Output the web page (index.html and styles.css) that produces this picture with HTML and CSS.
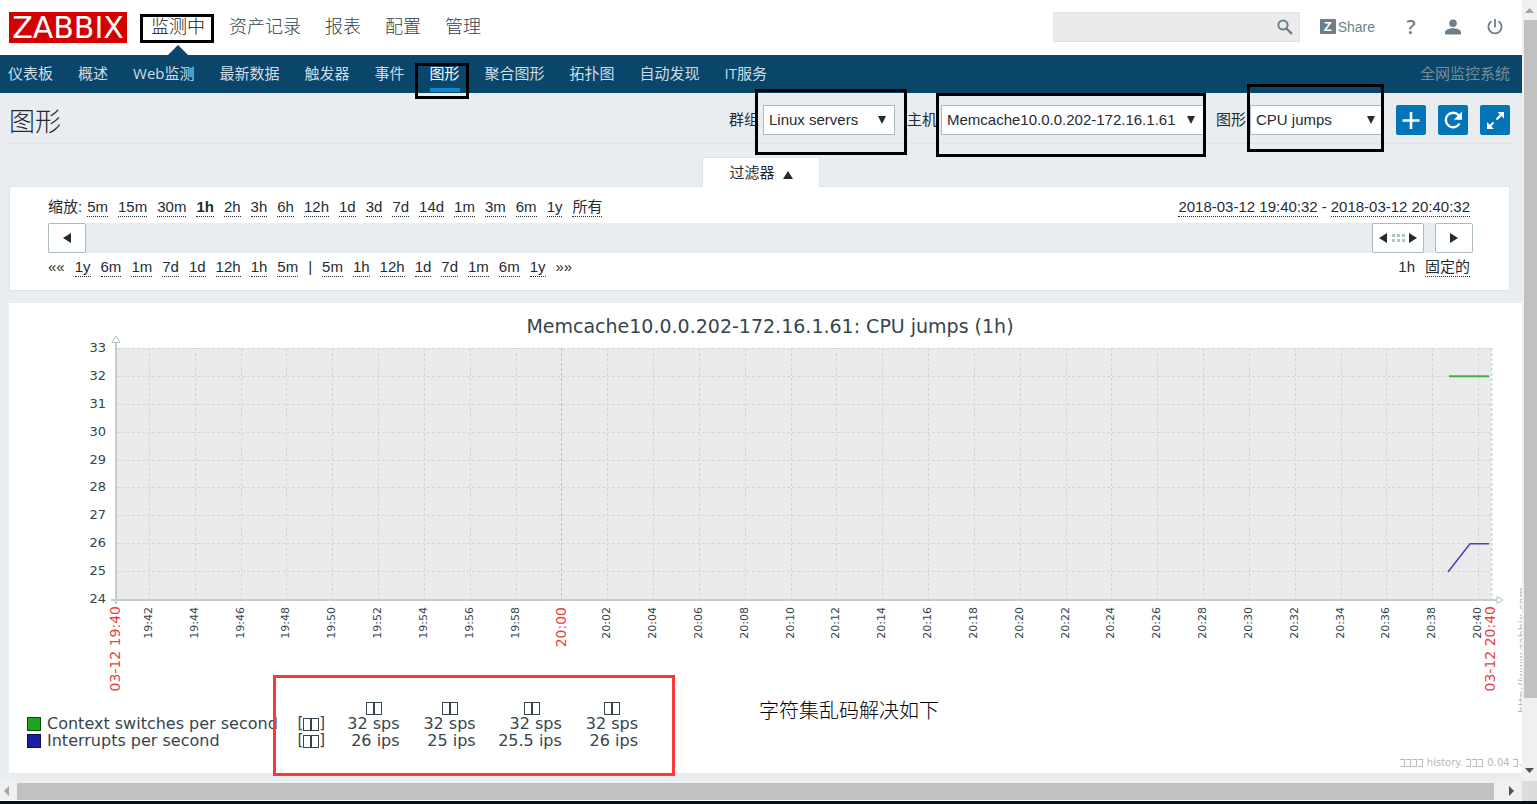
FILE: index.html
```html
<!DOCTYPE html>
<html lang="zh-CN">
<head>
<meta charset="utf-8">
<title>图形</title>
<link rel="stylesheet" href="styles.css">
</head>
<body>
<div class="window">
  <div class="page">
    <header class="top">
      <a class="logo" href="#">ZABBIX</a>
      <nav class="main-nav">
        <a class="current" href="#">监测中<span class="mark mark-menu"></span></a>
        <a href="#">资产记录</a>
        <a href="#">报表</a>
        <a href="#">配置</a>
        <a href="#">管理</a>
      </nav>
      <form class="search">
        <input type="text" aria-label="搜索">
        <button type="button" aria-label="搜索">
          <svg width="16" height="16" viewBox="0 0 16 16"><circle cx="6" cy="6" r="4.6" fill="none" stroke="#6c7f8a" stroke-width="2"/><path d="M9.5 9.5l5.3 5.3" stroke="#6c7f8a" stroke-width="2.4"/></svg>
        </button>
      </form>
      <a class="share" href="#"><span class="share-z">Z</span>Share</a>
      <a class="help" href="#">?</a>
      <a class="tool user" href="#" aria-label="用户">
        <svg width="16" height="16" viewBox="0 0 16 16"><circle cx="8" cy="4.2" r="3.8" fill="#6c7f8a"/><path d="M0 15.5v-2C0 10.5 5 9.3 8 9.3s8 1.200 8 4.200v2z" fill="#6c7f8a"/></svg>
      </a>
      <a class="tool" href="#" aria-label="退出">
        <svg width="16" height="16" viewBox="0 0 16 16" fill="none" stroke="#6c7f8a" stroke-width="1.800"><path d="M8 0v8.500M4.500 2.200a6.600 6.600 0 1 0 7 0"/></svg>
      </a>
    </header>
    <nav class="sub-nav">
      <a href="#">仪表板</a>
      <a href="#">概述</a>
      <a href="#">Web监测</a>
      <a href="#">最新数据</a>
      <a href="#">触发器</a>
      <a href="#">事件</a>
      <a class="selected" href="#">图形<span class="mark mark-sub"></span></a>
      <a href="#">聚合图形</a>
      <a href="#">拓扑图</a>
      <a href="#">自动发现</a>
      <a href="#">IT服务</a>
      <span class="server-name">全网监控系统</span>
    </nav>
    <main>
      <div class="title-bar">
        <h1>图形</h1>
        <div class="field">
          <label for="group">群组</label>
          <span class="select select-group"><select id="group"><option>Linux servers</option></select><svg class="caret" width="8" height="8"><path d="M0 0h8L4 8z"/></svg><span class="mark mark-group"></span></span>
        </div>
        <div class="field">
          <label for="host">主机</label>
          <span class="select select-host"><select id="host"><option>Memcache10.0.0.202-172.16.1.61</option></select><svg class="caret" width="8" height="8"><path d="M0 0h8L4 8z"/></svg><span class="mark mark-host"></span></span>
        </div>
        <div class="field">
          <label for="graph">图形</label>
          <span class="select select-graph"><select id="graph"><option>CPU jumps</option></select><svg class="caret" width="8" height="8"><path d="M0 0h8L4 8z"/></svg><span class="mark mark-graph"></span></span>
        </div>
        <div class="actions">
          <button type="button" aria-label="添加"><svg width="30" height="30"><path d="M15 7v17M6.500 15.500h17" stroke="#fff" stroke-width="2.600"/></svg></button>
          <button type="button" aria-label="刷新"><svg width="30" height="30"><path d="M21.500 18.500a7.300 7.300 0 1 1-.8-8.200" fill="none" stroke="#fff" stroke-width="2.400"/><path d="M24 6.500v8.200h-8.200z" fill="#fff"/></svg></button>
          <button type="button" aria-label="全屏"><svg width="30" height="30"><path d="M17.500 7H24v6.500zM7 17v7h7z" fill="#fff"/><path d="M16.500 14.500l5-5M9.500 21.500l4-4" stroke="#fff" stroke-width="2.200"/></svg></button>
        </div>
      </div>
      <button type="button" class="filter-tab">过滤器 <svg width="10" height="8"><path d="M0 8L5 0l5 8z" fill="#1f2c33"/></svg></button>
      <section class="filter">
        <div class="row">
          <div class="links zoom"><span>缩放:</span><a href="#">5m</a><a href="#">15m</a><a href="#">30m</a><a class="on" href="#">1h</a><a href="#">2h</a><a href="#">3h</a><a href="#">6h</a><a href="#">12h</a><a href="#">1d</a><a href="#">3d</a><a href="#">7d</a><a href="#">14d</a><a href="#">1m</a><a href="#">3m</a><a href="#">6m</a><a href="#">1y</a><a href="#">所有</a></div>
          <div class="links range"><a href="#">2018-03-12 19:40:32</a><span>-</span><a href="#">2018-03-12 20:40:32</a></div>
        </div>
        <div class="track">
          <button type="button" class="step back" aria-label="后退"><svg width="8" height="10"><path d="M8 0v10L0 5z"/></svg></button>
          <button type="button" class="handle" aria-label="时间段"><svg width="38" height="12"><path d="M8 1v10L0 6zM30 1v10l8-5z"/><path d="M13 2h3v3h-3zM18 2h3v3h-3zM23 2h3v3h-3zM13 7h3v3h-3zM18 7h3v3h-3zM23 7h3v3h-3z" fill="#b4c2cc"/></svg></button>
          <button type="button" class="step" aria-label="前进"><svg width="8" height="10"><path d="M0 0v10l8-5z"/></svg></button>
        </div>
        <div class="row">
          <div class="links"><span>««</span><a href="#">1y</a><a href="#">6m</a><a href="#">1m</a><a href="#">7d</a><a href="#">1d</a><a href="#">12h</a><a href="#">1h</a><a href="#">5m</a><span>|</span><a href="#">5m</a><a href="#">1h</a><a href="#">12h</a><a href="#">1d</a><a href="#">7d</a><a href="#">1m</a><a href="#">6m</a><a href="#">1y</a><span>»»</span></div>
          <div class="links"><span>1h</span><a href="#">固定的</a></div>
        </div>
      </section>
      <section class="chart">
        <svg class="plot" viewBox="9 303 1513 470">
          <text class="chart-title" x="770" y="333">Memcache10.0.0.202-172.16.1.61: CPU jumps (1h)</text>
          <rect x="117" y="348" width="1374" height="251" fill="#ebebeb"/>
          <g id="grid"></g>
          <path d="M1491.500 348V599" stroke="#d0dade" stroke-width="2" stroke-dasharray="3 2"/>
          <path d="M116 343V604M111 600H1497" stroke="#c2ced4" stroke-width="2" fill="none"/>
          <path d="M112 342.500l4-6.500 4 6.500zM1497 596.500v7l6-3.500z" fill="#fff" stroke="#b4c2c9"/>
          <path d="M1449 376.300h40" stroke="#3fb03f" stroke-width="2"/>
          <path d="M1448 572l22-28.300h19" fill="none" stroke="#4a47b5" stroke-width="1.600"/>
          <g id="labels"></g>
          <text class="site" transform="translate(1526 713) rotate(-90)">http://www.zabbix.com</text>
        </svg>
        <div class="below">
          <div class="legend">
            <table>
              <colgroup><col class="c-name"><col class="c-fn"><col class="c-last"><col class="c-min"><col class="c-avg"><col class="c-max"></colgroup>
              <tr><th></th><th></th><th><i class="box"></i><i class="box"></i></th><th><i class="box"></i><i class="box"></i></th><th class="avg"><i class="box"></i><i class="box"></i></th><th><i class="box"></i><i class="box"></i></th></tr>
              <tr><td class="name"><span class="swatch green"></span>Context switches per second</td><td class="fn">[<i class="box"></i><i class="box"></i>]</td><td>32 sps</td><td>32 sps</td><td>32 sps</td><td>32 sps</td></tr>
              <tr><td class="name"><span class="swatch blue"></span>Interrupts per second</td><td class="fn">[<i class="box"></i><i class="box"></i>]</td><td>26 ips</td><td>25 ips</td><td>25.5 ips</td><td>26 ips</td></tr>
            </table>
            <p class="remark">字符集乱码解决如下</p>
            <span class="mark mark-legend"></span>
          </div>
          <p class="source"><i class="mini"></i><i class="mini"></i><i class="mini"></i><i class="mini"></i> history. <i class="mini"></i><i class="mini"></i><i class="mini"></i> 0.04 <i class="mini"></i>.</p>
        </div>
      </section>
    </main>
  </div>
  <div class="vbar"><svg width="9" height="5"><path d="M0 5L4.500 0 9 5z" fill="#a3a3a3"/></svg><div class="vthumb"></div><svg width="9" height="5"><path d="M0 0h9L4.500 5z" fill="#505050"/></svg></div>
  <div class="hbar"><svg width="5" height="10"><path d="M5 0v10L0 5z" fill="#a3a3a3"/></svg><div class="hthumb"></div><svg width="5" height="10"><path d="M0 0v10l5-5z" fill="#505050"/></svg></div>
  <div class="corner"></div>
  <div class="desk"></div>
</div>
<script src="chart.js"></script>
</body>
</html>
```
FILE: styles.css
```css
* { box-sizing: border-box; }
body { margin: 0; font: 15px/18px "Liberation Sans", "Noto Sans CJK SC", sans-serif; color: #1f2c33; background: #ebeef0; }
a { color: inherit; text-decoration: none; }
button, select, input { font: inherit; color: inherit; }
button { padding: 0; cursor: pointer; }
svg { display: block; }
h1, p { margin: 0; }

.window { display: grid; grid-template: minmax(0, 1fr) 20px 3px / minmax(0, 1fr) 15px; height: 100vh; overflow: hidden; }
.page { overflow: hidden; background: #e9edf0; }
.mark { position: absolute; border: 3px solid #000; pointer-events: none; z-index: 2; }

.top { display: flex; align-items: center; height: 55px; padding: 0 19px 1px 9px; background: #fff; }
.logo { width: 118px; height: 31px; background: #d40000; color: #fff; font: 30px/32px "DejaVu Sans", sans-serif; text-align: center; }
.main-nav { display: flex; align-self: stretch; gap: 24px; margin-left: 24px; font-size: 18px; line-height: 50px; font-family: "Noto Sans CJK SC", sans-serif; font-weight: 300; color: #33434c; }
.main-nav a { position: relative; }
.main-nav .current { color: #111a20; }
.main-nav .current::after { content: ""; position: absolute; left: 17px; bottom: -1px; border: 10px solid transparent; border-top: 0; border-bottom-color: #0a466a; }
.mark-menu { inset: 14px -9px 11px -11px; }
.search { display: flex; width: 247px; height: 30px; margin: 0 20px 0 auto; border: 1px solid #e0e2e4; background: #ebebeb; }
.search input { flex: 1; min-width: 0; border: 0; background: none; }
.search button { width: 30px; border: 0; background: none; }
.search svg { margin-left: 8px; }
.share { display: flex; align-items: center; gap: 2px; padding-bottom: 1px; color: #6c7f8a; font-size: 14px; }
.share-z { width: 16px; height: 15px; border-radius: 1px; background: #6c7f8a; color: #fff; font: bold 13px/15px "Liberation Sans", sans-serif; text-align: center; }
.help { width: 20px; margin-left: 26px; color: #6c7f8a; font: 600 20px/20px "Open Sans", sans-serif; text-align: center; }
.tool { margin-left: 26px; }
.user { margin-left: 24px; }

.sub-nav { display: flex; gap: 25px; height: 38px; padding: 0 12px 0 8px; background: #0a466a; color: #cfdde6; font: 15px/36px "Open Sans", "Noto Sans CJK SC", sans-serif; }
.sub-nav a { position: relative; }
.sub-nav .selected { color: #fff; }
.sub-nav .selected::after { content: ""; position: absolute; left: 0; right: 0; bottom: 1px; height: 4px; background: #0f86d0; }
.mark-sub { inset: 8px -9px -6px -15px; }
.server-name { margin-left: auto; color: #768d99; }

.title-bar { display: flex; align-items: center; height: 51px; margin: 0 12px 0 9px; padding-bottom: 2px; padding-top: 5px; border-bottom: 1px solid #dfe4e7; }
h1 { margin-right: auto; font: 300 26px/36px "Noto Sans CJK SC", sans-serif; }
.field { display: flex; align-items: center; gap: 4px; margin-right: 12px; }
.select { position: relative; }
.select select { appearance: none; display: block; width: 100%; height: 30px; padding: 0 5px; border: 1px solid #acbbc2; border-radius: 0; background: #fff; }
.select-group { width: 132px; }
.select-host { width: 263px; }
.select-graph { width: 134px; }
.caret { position: absolute; right: 9px; top: 11px; fill: #1f2c33; pointer-events: none; }
.mark-group { inset: -16px -12px -20px -8px; }
.mark-host { inset: -12px -2px -22px -5px; }
.mark-graph { inset: -21px 0 -17px -3px; }
.actions { display: flex; gap: 12px; }
.actions button { width: 30px; height: 30px; border: 0; border-radius: 2px; background: #0275b8; }

.filter-tab { display: flex; align-items: center; justify-content: center; gap: 8px; position: relative; z-index: 1; width: 118px; height: 30px; margin: 13px auto 0; border: 1px solid #dfe4e7; border-bottom: 0; background: #fff; }
.filter-tab svg { margin-top: 4px; }
.filter { margin: -1px 12px 0 9px; padding: 10px 36px 13px 38px; border: 1px solid #dfe4e7; background: #fff; }
.row { display: flex; justify-content: space-between; padding-right: 3px; }
.links { display: flex; gap: 10px; line-height: 19px; }
.links a { border-bottom: 1px dotted #1f2c33; }
.links .on { font-weight: bold; }
.zoom span { margin-right: -5px; }
.range { gap: 4px; }
.track { display: flex; height: 30px; margin: 6px 0 4px; background: #e9edf0; }
.track button { display: flex; align-items: center; justify-content: center; border: 1px solid #acbbc2; border-radius: 2px; background: #fff; }
.track svg { fill: #1f2c33; }
.step { width: 38px; }
.handle { width: 52px; margin: 0 11px 0 auto; }

.chart { display: grid; margin: 12px 0 0 9px; background: #fff; }
.plot, .below { grid-area: 1 / 1; }
.plot { width: 100%; font-family: "DejaVu Sans", sans-serif; fill: #36454d; }
.chart-title { font-size: 19px; text-anchor: middle; }
.y-label { font-size: 13px; text-anchor: end; }
.t-label { font-size: 11px; text-anchor: end; }
.t-major { font-size: 14px; text-anchor: end; fill: #e8403c; }
.site { font-size: 11px; fill: #b5b5b5; }
.below { align-self: end; font-family: "DejaVu Sans", sans-serif; color: #36454d; }
.legend { position: relative; display: flex; gap: 121px; margin-left: 18px; }
table { border-collapse: collapse; table-layout: fixed; width: 611px; font-size: 16px; line-height: 17px; }
td, th { height: 17px; padding: 0; text-align: right; font-weight: normal; white-space: nowrap; }
th { padding-right: 18px; }
.avg { padding-right: 22px; }
.name, .fn { text-align: left; }
.c-name { width: 270px; }
.c-fn { width: 28px; }
.c-last { width: 74px; }
.c-min, .c-max { width: 76px; }
.c-avg { width: 86px; }
.box { display: inline-block; width: 8px; height: 13px; border: 1px solid #36454d; vertical-align: -3px; }
.fn { font-size: 15px; }
.swatch { display: inline-block; width: 14px; height: 14px; margin-right: 6px; border: 1px solid #0d4a0d; vertical-align: -2px; }
.green { background: #1ea51e; }
.blue { background: #1c1ca5; border-color: #0d0d4a; }
.remark { color: #000; font: 300 20px/24px "Noto Sans CJK SC", sans-serif; }
.mark-legend { left: 246px; top: -23px; width: 402px; height: 101px; border-color: #fb3838; }
.source { height: 24px; padding-top: 8px; color: #b9b9b9; font-size: 10px; line-height: 12px; text-align: right; }
.mini { display: inline-block; width: 5px; height: 8px; margin-right: 1px; border: 1px solid #b9b9b9; border-left: 0; vertical-align: -1px; }

.vbar { display: flex; flex-direction: column; align-items: center; padding: 8px 0; background: #f0f0f0; }
.vthumb { align-self: stretch; flex: 0 0 88.6%; margin: 7px 0 auto 2px; background: #c1c1c1; }
.hbar { display: flex; align-items: center; padding: 0 8px 0 4px; background: #f0f0f0; border-bottom: 1px solid #fff; }
.hthumb { flex: 1; height: 17px; margin: 1px 15px 0 8px; background: #c1c1c1; }
.corner { background: #dcdcdc; }
.desk { grid-column: 1 / 3; background: #07121e; }
```
FILE: chart.js
```js
const NS = "http://www.w3.org/2000/svg";
const grid = document.getElementById("grid");
const labels = document.getElementById("labels");

function line(d, color) {
  const p = document.createElementNS(NS, "path");
  p.setAttribute("d", d);
  p.setAttribute("stroke", color);
  p.setAttribute("stroke-dasharray", "3 2");
  grid.appendChild(p);
}

function label(text, cls, transform) {
  const t = document.createElementNS(NS, "text");
  t.setAttribute("class", cls);
  t.setAttribute("transform", transform);
  t.textContent = text;
  labels.appendChild(t);
}

for (let v = 24; v <= 33; v++) {
  const y = Math.round(599 - (v - 24) * 27.9);
  if (v > 24) line(`M117 ${y + 0.5}H1491`, "#cfd9dc");
  label(v, "y-label", `translate(106 ${y + 4})`);
}

for (let i = 0; i < 30; i++) {
  const x = Math.round(149 + i * 45.83);
  const minute = 42 + i * 2;
  const time = (minute < 60 ? 19 : 20) + ":" + String(minute % 60).padStart(2, "0");
  const hour = i === 9;
  line(`M${x + 0.5} 348V599`, hour ? "#b3bfc4" : "#cfd9dc");
  const text = i === 29 ? "20:40" : time;
  label(text, hour ? "t-major" : "t-label", `translate(${x + (hour ? 5 : 3)} 607) rotate(-90)`);
}

label("03-12 19:40", "t-major", "translate(120 606) rotate(-90)");
label("03-12 20:40", "t-major", "translate(1495 606) rotate(-90)");
```
